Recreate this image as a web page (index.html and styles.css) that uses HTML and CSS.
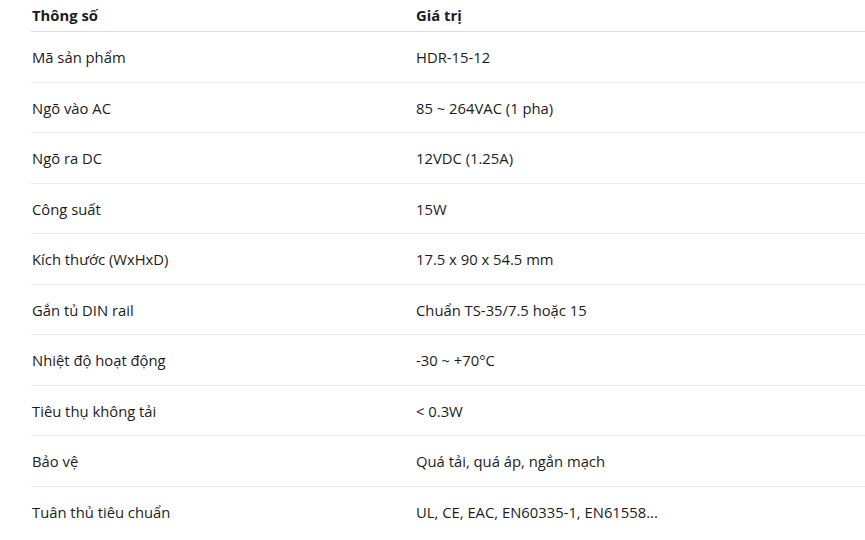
FILE: index.html
```html
<!DOCTYPE html>
<html lang="vi">
<head>
<meta charset="utf-8">
<link rel="stylesheet" href="styles.css">
</head>
<body>
<table class="spec">
  <thead>
    <tr><th class="c1">Thông số</th><th>Giá trị</th></tr>
  </thead>
  <tbody>
    <tr><td>Mã sản phẩm</td><td>HDR-15-12</td></tr>
    <tr><td>Ngõ vào AC</td><td>85 ~ 264VAC (1 pha)</td></tr>
    <tr><td>Ngõ ra DC</td><td>12VDC (1.25A)</td></tr>
    <tr><td>Công suất</td><td>15W</td></tr>
    <tr><td>Kích thước (WxHxD)</td><td>17.5 x 90 x 54.5 mm</td></tr>
    <tr><td>Gắn tủ DIN rail</td><td>Chuẩn TS-35/7.5 hoặc 15</td></tr>
    <tr><td>Nhiệt độ hoạt động</td><td>-30 ~ +70°C</td></tr>
    <tr><td>Tiêu thụ không tải</td><td>&lt; 0.3W</td></tr>
    <tr><td>Bảo vệ</td><td>Quá tải, quá áp, ngắn mạch</td></tr>
    <tr><td>Tuân thủ tiêu chuẩn</td><td>UL, CE, EAC, EN60335-1, EN61558...</td></tr>
  </tbody>
</table>
</body>
</html>
```

FILE: styles.css
```css
html, body {
  margin: 0;
  padding: 0;
  background: #fff;
}
body {
  font-family: "Open Sans", "Noto Sans", sans-serif;
  font-size: 14.8px;
  color: #1c1c1c;
}
.spec {
  border-collapse: collapse;
  margin-left: 31px;
  width: calc(100% - 31px);
}
.spec th {
  text-align: left;
  font-weight: 700;
  padding: 4px 0 5px 1px;
  line-height: 22px;
  border-bottom: 1px solid #dadada;
}
.spec th.c1,
.spec td:first-child {
  width: 383px;
}
.spec td {
  padding: 15px 0 13px 1px;
  line-height: 21.5px;
  border-bottom: 1px solid #ededed;
}
.spec tbody tr:last-child td {
  border-bottom: none;
}
```
